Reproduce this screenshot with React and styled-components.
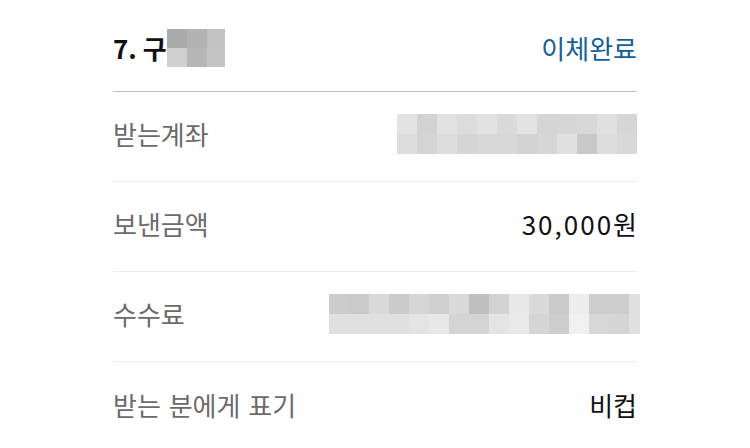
import React from "react";
import styled, { createGlobalStyle } from "styled-components";

const Global = createGlobalStyle`
  html, body { margin: 0; padding: 0; background: #fff; }
  body { font-family: "Noto Sans CJK KR", "Noto Sans", sans-serif; }
`;

const Page = styled.div`
  width: 750px;
  height: 448px;
  overflow: hidden;
  padding: 0 113px;
  box-sizing: border-box;
  background: #fff;
`;

const Header = styled.div`
  height: 92px;
  box-sizing: border-box;
  display: flex;
  align-items: center;
  justify-content: space-between;
  padding-top: 4px;
  border-bottom: 1px solid #bdbdbd;
`;

const Title = styled.div`
  display: flex;
  align-items: center;
  font-size: 26px;
  font-weight: 700;
  color: #111;
`;

const Status = styled.div`
  font-size: 26px;
  color: #135f9b;
`;

const Row = styled.div`
  height: 90px;
  box-sizing: border-box;
  display: flex;
  align-items: center;
  justify-content: space-between;
  border-bottom: ${(p) => (p.$last ? "none" : "1px solid #ececec")};
  padding-bottom: 6px;
`;

const Label = styled.div`
  font-size: 26px;
  color: #6b6b6b;
  word-spacing: 2px;
`;

const Value = styled.div`
  font-size: 26px;
  color: #111;
`;

const Digits = styled.span`
  letter-spacing: 2px;
`;

const Mosaic = styled.div`
  display: grid;
  grid-template-columns: ${(p) => p.$cols};
  grid-auto-rows: ${(p) => p.$rowH}px;
  margin-right: ${(p) => p.$mr || 0}px;
`;

const Cell = styled.div`
  background: ${(p) => p.$c};
`;

const hex = (v) => `rgb(${v},${v},${v})`;

function Blur({ top, bottom, cellW, lastW, rowH, mr }) {
  const n = top.length;
  const cols = Array.from({ length: n }, (_, i) =>
    i === n - 1 && lastW ? `${lastW}px` : `${cellW}px`
  ).join(" ");
  return (
    <Mosaic $cols={cols} $rowH={rowH} $mr={mr}>
      {top.map((v, i) => (
        <Cell key={"t" + i} $c={hex(v)} />
      ))}
      {bottom.map((v, i) => (
        <Cell key={"b" + i} $c={hex(v)} />
      ))}
    </Mosaic>
  );
}

export default function App() {
  return (
    <>
      <Global />
      <Page>
        <Header>
          <Title>
            <span>7. 구</span>
            <Blur
              top={[0xab, 0xb3, 0xc2]}
              bottom={[0xd0, 0xb6, 0xc4]}
              cellW={20}
              lastW={18}
              rowH={19}
            />
          </Title>
          <Status>이체완료</Status>
        </Header>
        <Row>
          <Label>받는계좌</Label>
          <Blur
            top={[0xe3, 0xd2, 0xe2, 0xdc, 0xe2, 0xda, 0xe3, 0xd5, 0xd6, 0xd8, 0xe0, 0xd6]}
            bottom={[0xdd, 0xd4, 0xdd, 0xd5, 0xd8, 0xd8, 0xd2, 0xd6, 0xe0, 0xc9, 0xdd, 0xd8]}
            cellW={20}
            rowH={20}
          />
        </Row>
        <Row>
          <Label>보낸금액</Label>
          <Value>
            <Digits>30,000</Digits>원
          </Value>
        </Row>
        <Row>
          <Label>수수료</Label>
          <Blur
            top={[0xcc, 0xca, 0xd9, 0xcb, 0xd6, 0xd0, 0xda, 0xbf, 0xd3, 0xe8, 0xda, 0xca, 0xed, 0xcd, 0xcd, 0xe0]}
            bottom={[0xe0, 0xe0, 0xe0, 0xe0, 0xe4, 0xe8, 0xd4, 0xd4, 0xe4, 0xe9, 0xd5, 0xcd, 0xf0, 0xd7, 0xd5, 0xe0]}
            cellW={20}
            lastW={11}
            rowH={20}
            mr={-3}
          />
        </Row>
        <Row $last>
          <Label>받는 분에게 표기</Label>
          <Value>비컵</Value>
        </Row>
      </Page>
    </>
  );
}
